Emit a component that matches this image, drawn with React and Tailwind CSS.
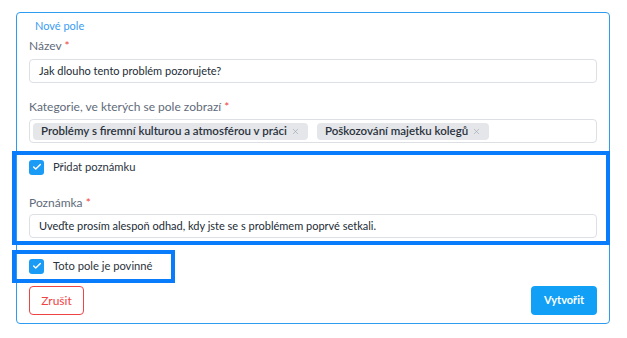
import { Check, X } from 'lucide-react'

const font = { fontFamily: 'Lato, "Noto Sans", sans-serif' }

function Label({ children }) {
  return (
    <div className="text-[12px] leading-4 text-[#5f6b7a]">
      {children} <span className="text-[#ef4444]">*</span>
    </div>
  )
}

function Field({ value }) {
  return (
    <div className="h-6 rounded border border-[#dcdfe4] px-[9px] flex items-center text-[11px] text-[#222b36]">
      {value}
    </div>
  )
}

function Tag({ children }) {
  return (
    <span className="h-[17px] flex items-center gap-1 rounded bg-[#e4e6ea] px-[8px] text-[11.5px] font-semibold text-[#2a323c]">
      {children}
      <X size={9} className="text-[#9aa1aa]" strokeWidth={1.5} />
    </span>
  )
}

function Box({ checked = true, label }) {
  return (
    <label className="flex items-center gap-[9px] text-[11.2px] text-[#2c3440]">
      <span className="w-[15px] h-[15px] rounded-[3px] bg-[#1a9bf5] flex items-center justify-center">
        {checked && <Check size={10} strokeWidth={3.5} className="text-white" />}
      </span>
      {label}
    </label>
  )
}

export default function App() {
  return (
    <div className="w-[627px] h-[338px] bg-white pt-3 pl-4" style={font}>
      <div className="w-[594px] h-[312px] rounded border border-[#2d9cf0] px-3 pt-[5px]">
        <div className="pl-[6px] text-[11px] leading-4 text-[#3a9cf2]">Nové pole</div>

        <div className="mt-1">
          <Label>Název</Label>
          <div className="mt-[5px]"><Field value="Jak dlouho tento problém pozorujete?" /></div>
        </div>

        <div className="mt-4">
          <Label>Kategorie, ve kterých se pole zobrazí</Label>
          <div className="mt-1 h-6 rounded border border-[#dcdfe4] px-[3px] flex items-center gap-[9px]">
            <Tag>Problémy s firemní kulturou a atmosférou v práci</Tag>
            <Tag>Poškozování majetku kolegů</Tag>
          </div>
        </div>

        <div className="mt-2 -ml-[17px] -mr-[13px] border-4 border-[#087cfa] pl-[13px] pr-[9px] pt-1 pb-[3px]">
          <div className="h-4"><Box label="Přidat poznámku" /></div>
          <div className="mt-5">
            <Label>Poznámka</Label>
            <div className="mt-[3px]"><Field value="Uveďte prosím alespoň odhad, kdy jste se s problémem poprvé setkali." /></div>
          </div>
        </div>

        <div className="mt-[5px] -ml-[17px] w-[163px] h-[33px] border-4 border-[#087cfa] pl-[13px] flex items-center">
          <Box label="Toto pole je povinné" />
        </div>

        <div className="mt-[3px] flex justify-between">
          <button className="h-[29px] w-[55px] rounded border border-[#ef4444] text-[12px] text-[#ef4444]">Zrušit</button>
          <button className="h-[29px] w-[66px] rounded bg-[#12a0f7] text-[11px] font-bold text-white">Vytvořit</button>
        </div>
      </div>
    </div>
  )
}
